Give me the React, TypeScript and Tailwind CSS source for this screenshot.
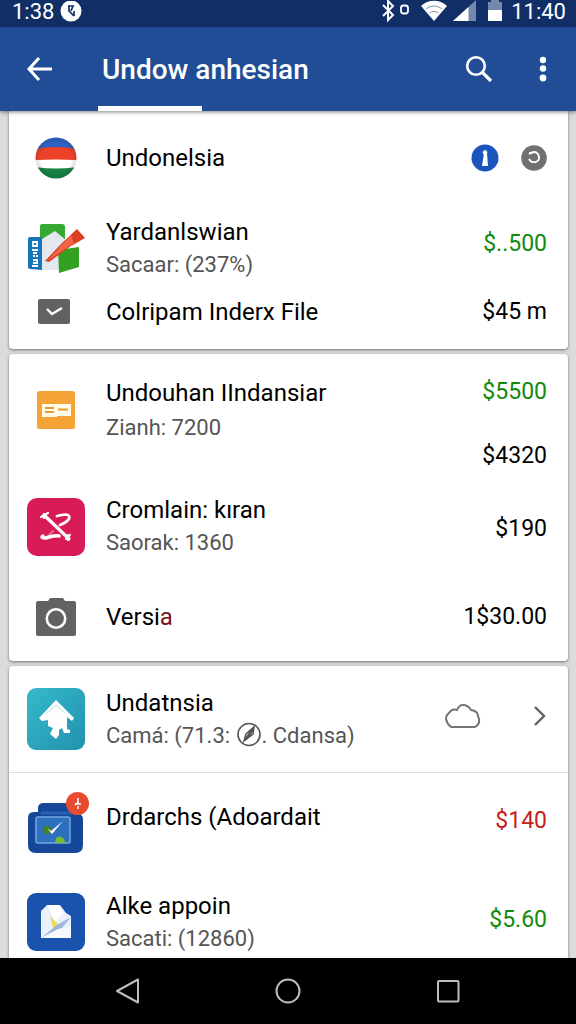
import { ReactNode } from 'react';

const tones = {
  black: 'text-black',
  green: 'text-[#128a0c]',
  red: 'text-[#c8201c]',
};

interface PriceProps {
  children: ReactNode;
  tone?: keyof typeof tones;
}

const Price = ({ children, tone = 'black' }: PriceProps) => (
  <span className={`text-[23px] leading-8 whitespace-nowrap ${tones[tone]}`}>{children}</span>
);

interface RowProps {
  icon: ReactNode;
  title: ReactNode;
  subtitle?: ReactNode;
  right?: ReactNode;
  className?: string;
}

const Row = ({ icon, title, subtitle, right, className = '' }: RowProps) => (
  <li className={`flex items-center gap-[21px] pl-[18px] pr-[21px] ${className}`}>
    <div className="flex w-[58px] shrink-0 justify-center">{icon}</div>
    <div className="min-w-0 flex-1 whitespace-nowrap">
      <h2 className="text-2xl leading-8 text-black">{title}</h2>
      {subtitle && <p className="pt-px text-[22px] leading-8 text-[#555]">{subtitle}</p>}
    </div>
    {right}
  </li>
);

const Card = ({ children, className = '' }: { children: ReactNode; className?: string }) => (
  <ul className={`ml-[9px] mr-2 bg-white shadow-[0_1px_3px_rgba(0,0,0,0.5)] ${className}`}>{children}</ul>
);

/* Status bar */
const StatusBar = () => (
  <div className="flex h-[27px] items-start justify-between bg-[#112f66] pl-3 pr-[10px] text-white">
    <div className="flex items-center gap-1.5">
      <span className="text-[22px] leading-6">1:38</span>
      <svg width="22" height="22" viewBox="0 0 22 22">
        <circle cx="11" cy="10" r="10.5" fill="#fff" />
        <path d="M8 5h6M9 5v5l5 5M13 5l-2 5M14 10v5" stroke="#112f66" strokeWidth="1.7" fill="none" />
      </svg>
    </div>
    <div className="flex items-center">
      <svg width="32" height="24" viewBox="0 0 32 24" fill="none" stroke="#fff">
        <path d="M2 5l10 10-5 5V1l5 5L2 16" strokeWidth="2" />
        <rect x="20" y="5.5" width="7" height="8" rx="2.5" strokeWidth="1.8" />
      </svg>
      <svg className="ml-2" width="26" height="24" viewBox="0 0 26 24">
        <path d="M0 6C7-1 19-1 26 6L13 21z" fill="#fff" />
        <path d="M5 9c5-4 11-4 16 0M8.5 13c3-2 6-2 9 0" fill="none" stroke="#7f90b3" strokeWidth="1" />
      </svg>
      <svg className="ml-1.5" width="24" height="24" viewBox="0 0 24 24">
        <path d="M23 0v21H0z" fill="#7587ae" />
        <path d="M15.5 7v14H0z" fill="#fff" />
      </svg>
      <svg className="ml-2.5" width="16" height="24" viewBox="0 0 16 24">
        <path d="M4 0h8v2h3v9H1V2h3z" fill="#7587ae" />
        <path d="M1 10h14v11H1z" fill="#fff" />
      </svg>
      <span className="ml-2 text-[22px] leading-6">11:40</span>
    </div>
  </div>
);

/* Row icons */
const FlagIcon = () => (
  <svg width="42" height="42" viewBox="0 0 42 42">
    <defs>
      <clipPath id="flag"><circle cx="21" cy="21" r="20.5" /></clipPath>
      <radialGradient id="flagShade">
        <stop offset="0.7" stopColor="#000" stopOpacity="0" />
        <stop offset="1" stopColor="#000" stopOpacity="0.14" />
      </radialGradient>
    </defs>
    <g clipPath="url(#flag)">
      <path d="M0 0h42v42H0z" fill="#fff" />
      <path d="M0 0h42v14H0z" fill="#2f63c4" />
      <path d="M0 12q21-4 42 0v11q-21-1-42 0z" fill="#ed4128" />
      <path d="M0 30q21 3 42 0v12H0z" fill="#168245" />
      <path d="M0 0h42v42H0z" fill="url(#flagShade)" />
    </g>
  </svg>
);

const MapIcon = () => (
  <svg width="58" height="52" viewBox="0 0 58 52">
    <path d="M13 4q0-2 2-2h20q3 0 3 3v18l-18 10-7-9z" fill="#36a931" />
    <path d="M15 17l13-8 12 10v29H15z" fill="#e3e8ef" />
    <path d="M31 28l21-3v20l-20 6z" fill="#32a021" />
    <path d="M50 7l8 9-14 8-22 16-4-1 17-18z" fill="#df3e25" />
    <path d="M44 13l3 8-27 18z" fill="#f06548" />
    <path d="M1 17q0-2 2-2h12v33l-12-1q-2 0-2-2z" fill="#1776b9" />
    <path d="M6 20h4v4H6zM5 28h6M6 31h4M6 34h2M9 34h2M6 38h4v3H6M5 44h6" fill="none" stroke="#fff" strokeWidth="1.8" />
  </svg>
);

const CheckIcon = () => (
  <svg className="mr-1" width="32" height="26" viewBox="0 0 32 26">
    <rect width="32" height="25" rx="2" fill="#626262" />
    <path d="M9 10l5 5 10-6" fill="none" stroke="#fff" strokeWidth="2.4" />
  </svg>
);

const TicketIcon = () => (
  <svg width="38" height="38" viewBox="0 0 38 38">
    <rect width="38" height="38" rx="2.5" fill="#f5a236" />
    <path d="M5 13h29v12H20v1H5z" fill="#fffbe8" />
    <path d="M8 17h9M8 21h9M21 18.5h10" stroke="#e79a33" strokeWidth="1.8" />
  </svg>
);

const ToolsIcon = () => (
  <svg width="58" height="58" viewBox="0 0 58 58">
    <rect width="58" height="58" rx="10" fill="#d81b57" />
    <g fill="none" stroke="#fff" strokeLinecap="round" strokeLinejoin="round">
      <path d="M17 17l25 24" strokeWidth="3.2" />
      <path d="M14 19l7-4M17 16v4M39 41l4-4M41 42v-5" strokeWidth="2.2" />
      <path d="M30 18q14-4 12 3-3 4-9 6" strokeWidth="2.8" />
      <path d="M26 33l-5 5" stroke="#ef6d91" strokeWidth="2" />
      <path d="M16 38q-3 2 3 2 9-3 13-2" strokeWidth="3.5" />
    </g>
  </svg>
);

const CameraIcon = () => (
  <svg width="42" height="40" viewBox="0 0 42 40">
    <path d="M3 4h10l2-3h13l2 3h9q2 0 2 2v31q0 2-2 2H3q-2 0-2-2V6q0-2 2-2z" fill="#606263" />
    <circle cx="21" cy="21.5" r="9.2" fill="none" stroke="#fff" strokeWidth="2.6" />
  </svg>
);

const HomeIcon = () => (
  <svg width="58" height="62" viewBox="0 0 58 62">
    <defs>
      <linearGradient id="teal" x1="0" y1="0" x2="1" y2="1">
        <stop offset="0" stopColor="#36bacb" />
        <stop offset="1" stopColor="#2191af" />
      </linearGradient>
    </defs>
    <rect width="58" height="62" rx="9" fill="url(#teal)" />
    <path d="M29 12l18 18-2 3-5-4v12l3 1v3h-6l-2-5-3 2v5l-3 4-6-5 3-6-5-2V32l-6 1-3-3z" fill="#fff" />
    <path d="M19 26l10-9 9 8" fill="none" stroke="#d5edf2" strokeWidth="1.5" />
  </svg>
);

const FolderIcon = () => (
  <div className="relative">
    <svg width="58" height="58" viewBox="0 0 58 58">
      <path d="M11 12q0-5 6-5h30q7 0 7 7v5q2 1 2 4v26q0 8-8 8H9q-8 0-8-8V22q0-6 6-6h4z" fill="#15489b" />
      <path d="M14 17h32" stroke="#2b61ae" strokeWidth="3" />
      <rect x="9" y="21" width="34" height="26" rx="2" fill="#2d70bd" stroke="#74a9df" strokeWidth="1.5" />
      <circle cx="20" cy="34" r="4" fill="#42831f" />
      <path d="M20 32l4 3 12-10-11 13z" fill="#fff" />
      <path d="M28 47q1-8 6-6 4 1 4 6z" fill="#77bd32" />
    </svg>
    <span className="absolute -right-1 -top-1 flex h-[23px] w-[23px] items-center justify-center rounded-full bg-[#e94b2f]">
      <svg width="9" height="13" viewBox="0 0 9 13" fill="none" stroke="#fff" strokeWidth="1.5">
        <path d="M5 1v6M2 7h6M5 5L2 8M5 9v3" />
      </svg>
    </span>
  </div>
);

const MailIcon = () => (
  <svg width="58" height="58" viewBox="0 0 58 58">
    <rect width="58" height="58" rx="9" fill="#1a53ad" />
    <path d="M14 18l6-6h13l6 8 5 3v22H14z" fill="#eaf1fb" />
    <path d="M21 12h11l4 8-8 10z" fill="#fff" />
    <path d="M23 23l10 10-6 5z" fill="#e8dc4b" />
    <path d="M14 45l16-13 14-8-9 11z" fill="#9fb6dc" />
    <path d="M14 45l17-9 13-2v11z" fill="#f5f8fd" />
  </svg>
);

const LeafBadge = () => (
  <svg className="inline-block align-[-4px]" width="26" height="25" viewBox="0 0 26 25" fill="none" stroke="#555">
    <circle cx="13" cy="12.5" r="11" strokeWidth="1.6" />
    <path d="M8 19l2-7 8-7-1 7zM8 19l9-13M11 17l6-9" strokeWidth="1.5" />
  </svg>
);

const App = () => {
  return (
    <div className="flex min-h-screen flex-col bg-[#dcdcdc] font-['Roboto',sans-serif]">
      <header className="relative shadow-[0_1px_4px_rgba(0,0,0,0.5)]">
        <StatusBar />
        <div className="flex h-[84px] items-center bg-[#204d95] pl-6 pr-5 text-white">
          <button type="button" aria-label="Back">
            <svg width="30" height="30" viewBox="0 0 30 30" fill="none" stroke="currentColor" strokeWidth="3">
              <path d="M15 4L5 15l10 11M5 15h23" />
            </svg>
          </button>
          <div className="ml-11 flex h-full flex-1 flex-col items-start justify-end">
            <h1 className="pl-1 text-[28px] font-medium leading-10">Undow anhesian</h1>
            <div className="mt-4 h-[5px] w-[104px] bg-white" />
          </div>
          <button type="button" aria-label="Search">
            <svg width="30" height="30" viewBox="0 0 30 30" fill="none" stroke="currentColor">
              <circle cx="12" cy="12" r="8.8" strokeWidth="2.6" />
              <path d="M18 18l9 9" strokeWidth="3.2" />
            </svg>
          </button>
          <button type="button" aria-label="More options" className="ml-9">
            <svg width="26" height="30" viewBox="0 0 26 30" fill="currentColor">
              <circle cx="13" cy="6" r="3.2" />
              <circle cx="13" cy="14.5" r="3.2" />
              <circle cx="13" cy="24" r="3.4" />
            </svg>
          </button>
        </div>
      </header>

      <main className="flex flex-1 flex-col gap-[5px]">
        <Card className="rounded-b pb-4">
          <Row
            className="h-[94px]"
            icon={<FlagIcon />}
            title="Undonelsia"
            right={
              <div className="flex items-center gap-[22px]">
                <button type="button" aria-label="Info">
                  <svg width="28" height="28" viewBox="0 0 28 28">
                    <circle cx="14" cy="14" r="13.5" fill="#1c54be" />
                    <circle cx="14" cy="8.5" r="2.3" fill="#fff" />
                    <path d="M13 9h3l1 13h-6z" fill="#fff" />
                  </svg>
                </button>
                <button type="button" aria-label="Refresh">
                  <svg width="26" height="26" viewBox="0 0 26 26">
                    <circle cx="13" cy="13" r="12.8" fill="#707070" />
                    <path d="M8 9q6-4 9 0 3 6-2 8-5 1-7-3M8 8h4" fill="none" stroke="#fff" strokeWidth="1.8" />
                  </svg>
                </button>
              </div>
            }
          />
          <Row
            className="h-[86px]"
            icon={<MapIcon />}
            title="Yardanlswian"
            subtitle="Sacaar: (237%)"
            right={<div className="pb-2"><Price tone="green">$..500</Price></div>}
          />
          <Row
            className="h-[42px]"
            icon={<CheckIcon />}
            title="Colripam Inderx File"
            right={<Price>$45 m</Price>}
          />
        </Card>

        <Card className="rounded pb-[22px] pt-[22px]">
          <Row
            className="h-[96px]"
            icon={<div className="pb-7"><TicketIcon /></div>}
            title="Undouhan IIndansiar"
            subtitle={<span className="block pb-7 pt-0.5">Zianh: 7200</span>}
            right={
              <div className="flex flex-col gap-8">
                <Price tone="green">$5500</Price>
                <Price>$4320</Price>
              </div>
            }
          />
          <Row
            className="mt-[22px]"
            icon={<ToolsIcon />}
            title="Cromlain: kıran"
            subtitle="Saorak: 1360"
            right={<div className="pt-1"><Price>$190</Price></div>}
          />
          <Row
            className="mt-9 h-[44px]"
            icon={<CameraIcon />}
            title={<>Versi<span className="text-[#7a1420]">a</span></>}
            right={<Price>1$30.00</Price>}
          />
        </Card>

        <Card className="flex-1 rounded-t">
          <Row
            className="h-[107px] border-b border-[#ddd]"
            icon={<HomeIcon />}
            title="Undatnsia"
            subtitle={<>Camá: (71.3: <LeafBadge />. Cdansa)</>}
            right={
              <div className="flex items-center gap-[52px] pb-1.5">
                <svg width="36" height="28" viewBox="0 0 36 28" fill="none" stroke="#757575" strokeWidth="2">
                  <path d="M6 25h24q5-3 4-8l-1-3q0-5-7-6-3-5-8-5-4 0-6 5-5-2-8 3-3 2-3 6 1 5 5 8z" />
                </svg>
                <button type="button" aria-label="Open">
                  <svg width="14" height="24" viewBox="0 0 14 24" fill="none" stroke="#606060" strokeWidth="2.4">
                    <path d="M2 3l9 9-9 9" />
                  </svg>
                </button>
              </div>
            }
          />
          <Row
            className="h-[104px]"
            icon={<FolderIcon />}
            title={<span className="block pb-4">Drdarchs (Adoardait</span>}
            right={<div className="pb-2"><Price tone="red">$140</Price></div>}
          />
          <Row
            className="mt-[10px] h-[70px]"
            icon={<MailIcon />}
            title="Alke appoin"
            subtitle="Sacati: (12860)"
            right={<div className="pb-1"><Price tone="green">$5.60</Price></div>}
          />
        </Card>
      </main>

      {/* System navigation */}
      <nav className="flex h-[66px] items-center justify-center gap-[132px] bg-black text-[#bdbdbd]">
        <button type="button" aria-label="System back">
          <svg width="28" height="28" viewBox="0 0 28 28" fill="none" stroke="currentColor" strokeWidth="2" strokeLinejoin="round">
            <path d="M24 2.5v23L3 14z" />
          </svg>
        </button>
        <button type="button" aria-label="Home">
          <svg width="28" height="28" viewBox="0 0 28 28" fill="none" stroke="currentColor" strokeWidth="2">
            <circle cx="14" cy="14" r="11.5" />
          </svg>
        </button>
        <button type="button" aria-label="Recent apps">
          <svg width="28" height="28" viewBox="0 0 28 28" fill="none" stroke="currentColor" strokeWidth="2">
            <rect x="4" y="4" width="20.5" height="20.5" rx="1" />
          </svg>
        </button>
      </nav>
    </div>
  );
};

export default App;
